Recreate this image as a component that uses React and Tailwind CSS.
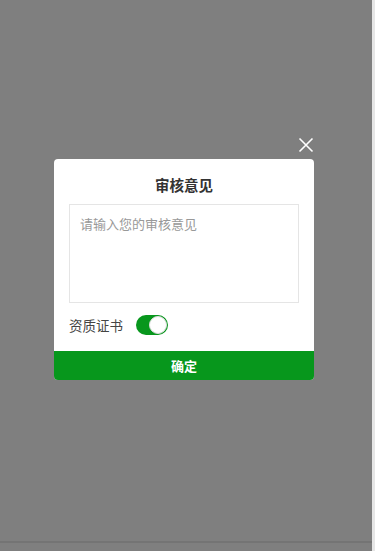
import React from "react";

export default function App() {
  return (
    <div
      className="relative w-[375px] h-[551px] bg-[#7f7f7f] overflow-hidden"
      style={{ fontFamily: '"Noto Sans CJK SC", "Liberation Sans", sans-serif' }}
    >
      <div className="absolute right-0 top-0 h-full w-[3px] bg-[#e6e6e6]" />
      <div className="absolute left-0 bottom-[8px] w-[372px] h-[2px] bg-[#747474]" />
      <div className="absolute left-[54px] top-[136px] w-[260px] flex flex-col items-end">
        <button className="w-[18px] h-[18px] mb-[5px] mr-[-1px] flex items-center justify-center">
          <svg width="16" height="16" viewBox="0 0 16 16">
            <path d="M1.5 1.5 L14.5 14.5 M14.5 1.5 L1.5 14.5" stroke="#fff" strokeWidth="1.6" fill="none" />
          </svg>
        </button>
        <div className="w-[260px] bg-white rounded-[4px] overflow-hidden flex flex-col">
          <div className="h-[45px] flex items-end justify-center pb-[8px] text-[14.5px] font-bold text-[#333]">
            审核意见
          </div>
          <div className="px-[15px]">
            <div className="h-[99px] border border-[#e5e5e5] px-[10px] pt-[9px] text-[13px] text-[#999]">
              请输入您的审核意见
            </div>
          </div>
          <div className="flex items-center px-[15px] h-[48px] pb-[4px]">
            <span className="text-[13.5px] text-[#444]">资质证书</span>
            <div className="ml-[13px] w-[32px] h-[20px] rounded-full bg-[#08971d] relative">
              <div className="absolute right-[1px] top-[1px] w-[18px] h-[18px] rounded-full bg-white border border-[#ddd]" />
            </div>
          </div>
          <div className="h-[29px] bg-[#07971c] flex items-center justify-center text-white text-[13px] font-bold">
            确定
          </div>
        </div>
      </div>
    </div>
  );
}
